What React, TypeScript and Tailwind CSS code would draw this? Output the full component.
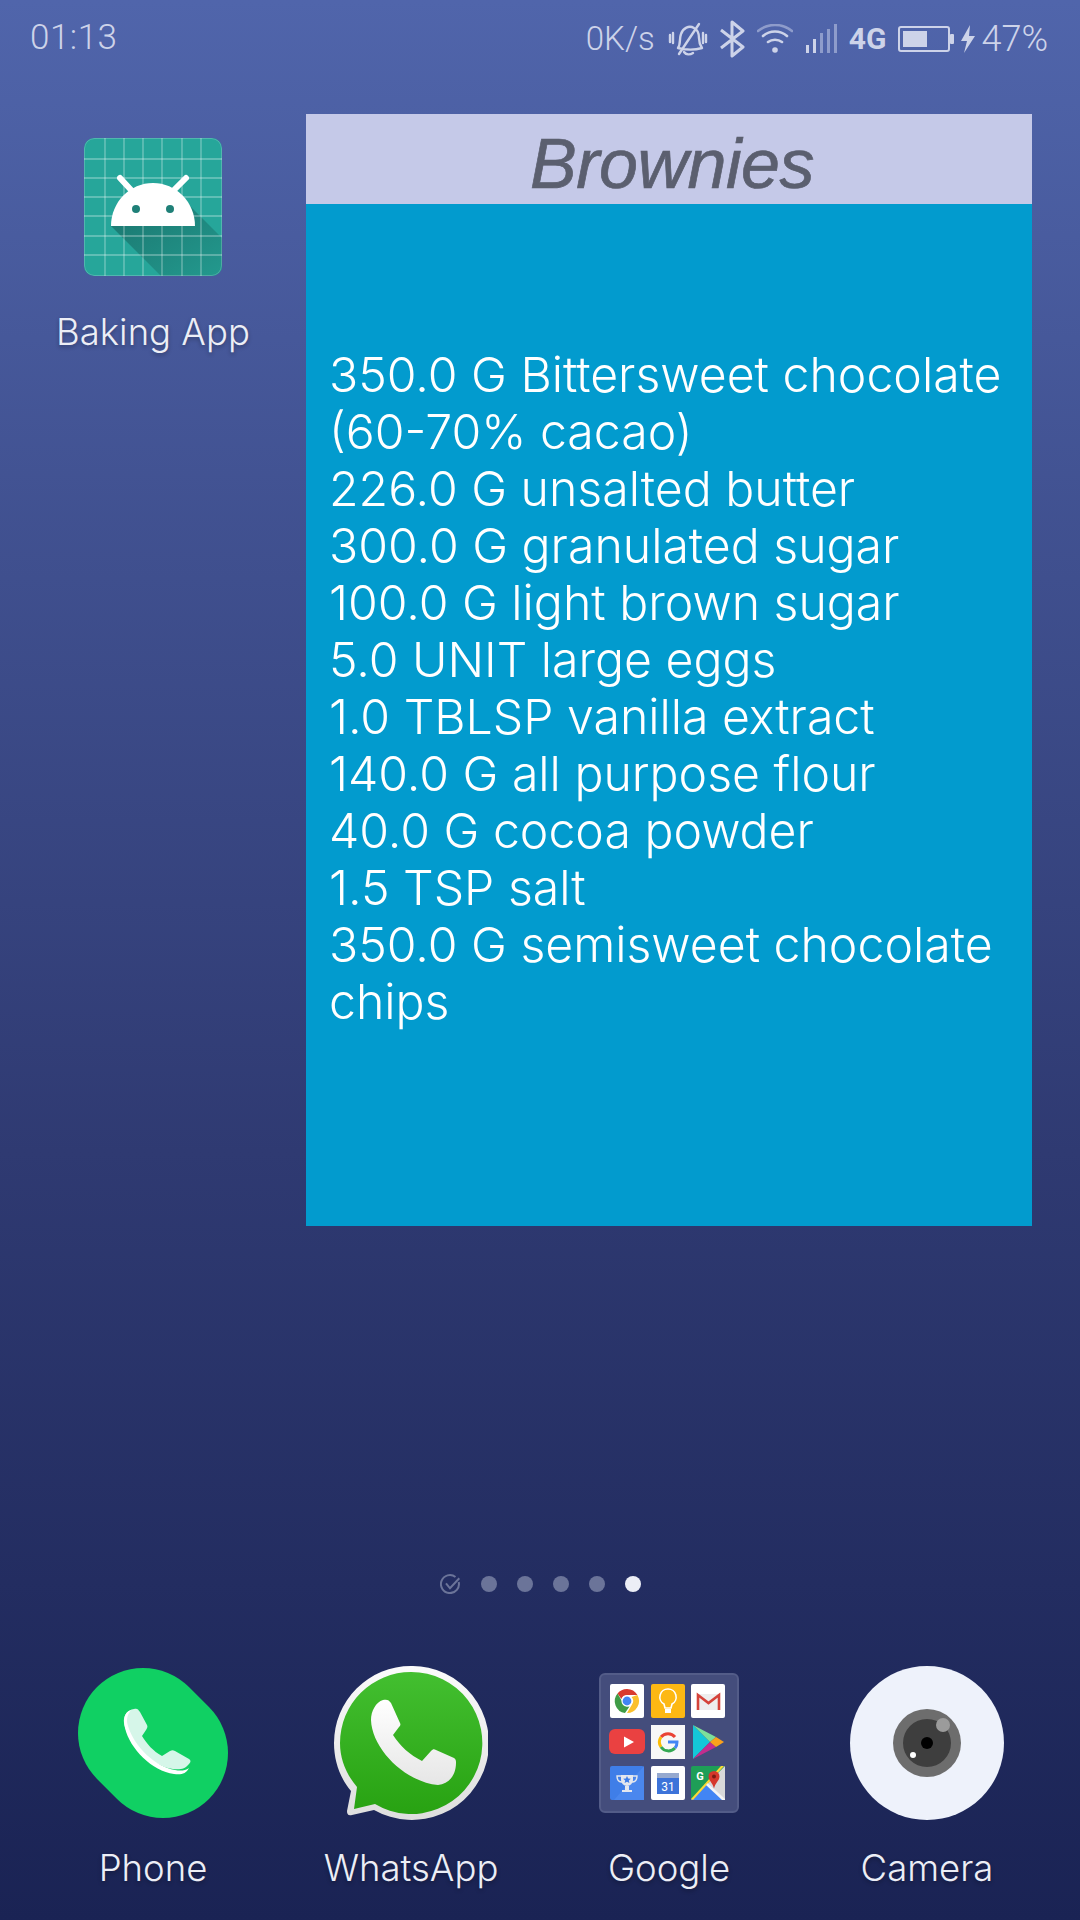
const ingredients = [
  "350.0 G Bittersweet chocolate (60-70% cacao)",
  "226.0 G unsalted butter",
  "300.0 G granulated sugar",
  "100.0 G light brown sugar",
  "5.0 UNIT large eggs",
  "1.0 TBLSP vanilla extract",
  "140.0 G all purpose flour",
  "40.0 G cocoa powder",
  "1.5 TSP salt",
  "350.0 G semisweet chocolate chips",
];

function StatusBar() {
  return (
    <div className="flex h-[76px] items-center justify-between pl-[30px] pr-[32px] pt-[1px] font-['Roboto',sans-serif] text-[36px] font-light text-[#cdd3e9]">
      <span className="text-[35px] tracking-[0.5px]">01:13</span>
      <div className="flex items-center">
        <span className="text-[33px]">0K/s</span>
        <svg className="ml-[13px]" width="40" height="36" viewBox="0 0 40 36" fill="none" stroke="#cdd3e9" strokeWidth="2.4">
          <path d="M10 27c3-4 1-9 3-14 2-6 8-9 13-6 4 2 5 6 5 10 0 4 1 7 3 10-7 2-16 2-24 0zM11 33 31 3" strokeLinecap="round" strokeLinejoin="round" />
          <path d="M16 31c2 3 6 3 9 1M2 14v7M5 12v10M35 12v10M38 14v7" strokeLinecap="round" />
        </svg>
        <svg className="ml-[12px]" width="25" height="38" viewBox="0 0 25 38" fill="none" stroke="#cdd3e9" strokeWidth="3">
          <path d="M1 10 23 27 12 36V2l11 9L1 28" strokeLinejoin="round" />
        </svg>
        <svg className="ml-[12px]" width="36" height="30" viewBox="0 0 36 30" fill="none" strokeWidth="2.6" strokeLinecap="round">
          <path d="M1 7c10-8 24-8 34 0" stroke="#8e9ccb" />
          <path d="M6 12c7-6 17-6 24 0M11 18c4-3 10-3 14 0" stroke="#cdd3e9" />
          <circle cx="18" cy="26" r="2.8" fill="#cdd3e9" stroke="none" />
        </svg>
        <svg className="ml-[13px]" width="31" height="29" viewBox="0 0 31 29">
          <rect x="0" y="21" width="3" height="8" fill="#cdd3e9" />
          <rect x="7" y="15" width="3" height="14" fill="#cdd3e9" />
          <rect x="14" y="9" width="3" height="20" fill="#8e9ccb" />
          <rect x="21" y="5" width="3" height="24" fill="#8e9ccb" />
          <rect x="28" y="0" width="3" height="29" fill="#8e9ccb" />
        </svg>
        <span className="ml-[12px] text-[30px] font-bold">4G</span>
        <svg className="ml-[12px]" width="56" height="26" viewBox="0 0 56 26">
          <rect x="1" y="1" width="50" height="24" rx="2" fill="none" stroke="#cdd3e9" strokeWidth="2" />
          <rect x="5" y="5" width="24" height="16" fill="#cdd3e9" />
          <rect x="52" y="8" width="4" height="10" rx="1" fill="#cdd3e9" />
        </svg>
        <svg className="ml-[7px]" width="14" height="28" viewBox="0 0 14 28">
          <path d="M9 0 0 16h6L3 28 14 11H8z" fill="#cdd3e9" />
        </svg>
        <span className="ml-[6px]">47%</span>
      </div>
    </div>
  );
}

function AndroidIcon() {
  const lines = [21, 40, 59, 78, 98, 117];
  return (
    <svg width="138" height="138" viewBox="0 0 138 138">
      <defs>
        <clipPath id="tile">
          <rect width="138" height="138" rx="10" />
        </clipPath>
        <linearGradient id="shade" x1="0.2" y1="0.2" x2="1" y2="1">
          <stop offset="0" stopColor="#1c7d75" />
          <stop offset="1" stopColor="#23998e" />
        </linearGradient>
      </defs>
      <g clipPath="url(#tile)">
        <rect width="138" height="138" fill="#26a69a" />
        <path d="M27 88 77 138H138V100L105 67z" fill="url(#shade)" />
        {lines.map((p) => (
          <g key={p} stroke="#ffffff" strokeOpacity="0.36" strokeWidth="1.3">
            <line x1={p} y1="0" x2={p} y2="138" />
            <line x1="0" y1={p} x2="138" y2={p} />
          </g>
        ))}
        <rect x="0.5" y="0.5" width="137" height="137" rx="10" fill="none" stroke="#ffffff" strokeOpacity="0.2" />
      </g>
      <path d="M36 40 48 53M102 40 89 53" stroke="#fff" strokeWidth="6" strokeLinecap="round" />
      <path d="M27 88c0-24 19-43 42-43s42 19 42 43z" fill="#fff" />
      <circle cx="52" cy="71" r="4" fill="#1f8078" />
      <circle cx="86" cy="71" r="4" fill="#1f8078" />
    </svg>
  );
}

function PhoneIcon() {
  return (
    <svg width="150" height="150" viewBox="0 0 150 150">
      <path d="M65 65 85 85" stroke="#10d063" strokeWidth="130" strokeLinecap="round" />
      <path d="M56 41c3-1 4 0 6 3l7 13c1 2 0 3-1 5l-4 6c5 8 11 15 20 20l8-5c2-1 3-1 5 0l14 8c2 1 2 3 0 5-4 5-9 6-16 5-22-3-46-27-49-46-1-7 3-13 10-14z" fill="#d6f6e9" />
      <path d="M53 42c-7 2-8 10-6 18 5 21 27 43 49 46 7 1 12 0 15-6-4 3-9 3-14 2-20-3-41-24-47-44-2-6-1-11 3-16z" fill="#fff" />
    </svg>
  );
}

function WhatsAppIcon() {
  return (
    <svg width="154" height="154" viewBox="0 0 154 154">
      <defs>
        <linearGradient id="waGreen" x1="0" y1="0" x2="0" y2="1">
          <stop offset="0" stopColor="#43bf30" />
          <stop offset="1" stopColor="#28a212" />
        </linearGradient>
        <linearGradient id="waPhone" x1="0" y1="0" x2="0" y2="1">
          <stop offset="0" stopColor="#ffffff" />
          <stop offset="1" stopColor="#e6e6e6" />
        </linearGradient>
        <linearGradient id="waRing" x1="0" y1="0" x2="0" y2="1">
          <stop offset="0" stopColor="#fbfbfb" />
          <stop offset="1" stopColor="#dedede" />
        </linearGradient>
      </defs>
      <path d="M77 0a77 77 0 1 1-37 144l-22 5c-4 1-5-1-5-4l4-20C6 112 0 95 0 77A77 77 0 0 1 77 0z" fill="url(#waRing)" />
      <path d="M77 6a71 71 0 1 1-36 132l-21 5 3-22C12 108 6 93 6 77A71 71 0 0 1 77 6z" fill="url(#waGreen)" />
      <path d="M49 34c4-1 6 0 8 3l9 20c1 2 0 3-1 4l-6 8c7 11 17 20 29 26l9-10c2-2 3-2 5-1l18 8c2 1 2 3 2 5 0 12-7 21-18 22-33-3-66-36-67-65 0-9 5-18 12-20z" fill="url(#waPhone)" />
    </svg>
  );
}

function CameraIcon() {
  return (
    <svg width="154" height="154" viewBox="0 0 154 154">
      <circle cx="77" cy="77" r="77" fill="#eef2fb" />
      <circle cx="77" cy="77" r="34" fill="#6d6d6d" />
      <circle cx="77" cy="77" r="24" fill="#3e3e3e" />
      <circle cx="77" cy="77" r="6" fill="#000" />
      <circle cx="93" cy="59" r="7" fill="#9b9b9b" />
      <circle cx="63" cy="89" r="3" fill="#fff" />
    </svg>
  );
}

function Tile({ children }: { children: React.ReactNode }) {
  return (
    <svg width="34" height="34" viewBox="0 0 34 34" className="overflow-visible">
      {children}
    </svg>
  );
}

function GoogleFolder() {
  return (
    <div className="grid h-[140px] w-[140px] grid-cols-[34px_34px_34px] content-start gap-x-[6.5px] gap-y-[7px] rounded-[6px] border-2 border-[#535c88] bg-[#444d7c] p-[9px]">
      <Tile>
        <rect width="34" height="34" rx="2" fill="#fff" />
        <path d="M17 5a12 12 0 0 1 10.4 6H17a6 6 0 0 0-5.6 4L7.5 9.500A12 12 0 0 1 17 5z" fill="#d93a2e" />
        <path d="M27.400 11A12 12 0 0 1 17 29l5-8.500a6 6 0 0 0-.5-7.500z" fill="#fbc02d" />
        <path d="M7.500 9.500l5 8.500a6 6 0 0 0 7 4.500L15 29A12 12 0 0 1 7.500 9.500z" fill="#3f9c46" />
        <circle cx="17" cy="17" r="5" fill="#4285f4" stroke="#fff" strokeWidth="1.2" />
      </Tile>
      <Tile>
        <rect width="34" height="34" rx="2" fill="#fdb813" />
        <path d="M17 5a8 8 0 0 0-4 15l1 4h6l1-4a8 8 0 0 0-4-15z" fill="none" stroke="#fff" strokeWidth="1.6" />
        <rect x="14" y="25" width="6" height="4" fill="#fff" />
      </Tile>
      <Tile>
        <rect width="34" height="34" rx="2" fill="#fff" />
        <path d="M6 10h23v16H6z" fill="#eeeeee" />
        <path d="M7 26V11l10.500 8L28 11v15" fill="none" stroke="#d5433a" strokeWidth="2.600" />
      </Tile>
      <Tile>
        <rect x="-1" y="4" width="36" height="25" rx="6" fill="#ea4141" />
        <path d="M14 11.500 24 17 14 22.500z" fill="#fff" />
      </Tile>
      <Tile>
        <rect width="34" height="34" fill="#f7f7f7" />
        <path d="M24 12a9 9 0 0 0-14 0" fill="none" stroke="#ea4335" strokeWidth="3" />
        <path d="M10 12a9 9 0 0 0 0 10" fill="none" stroke="#fbbc05" strokeWidth="3" />
        <path d="M10 22a9 9 0 0 0 14 1" fill="none" stroke="#34a853" strokeWidth="3" />
        <path d="M24 23a9 9 0 0 0 2-6h-9" fill="none" stroke="#4285f4" strokeWidth="3" />
      </Tile>
      <Tile>
        <path d="M2 0 19 17 2 34z" fill="#14c6d8" />
        <path d="M2 0 25 12 19 17z" fill="#7de09a" />
        <path d="M2 34 25 22 19 17z" fill="#c22d8e" />
        <path d="M25 12 33 17 25 22 19 17z" fill="#fba21b" />
      </Tile>
      <Tile>
        <rect width="34" height="34" rx="2" fill="#3f7ee8" />
        <path d="M34 0v34H4z" fill="#4a87ee" />
        <path d="M11 9h12v5a6 6 0 0 1-12 0zM15 20h4v4h3v2H12v-2h3z" fill="#e4e7ee" />
        <path d="M11 10H7c0 4 2 6 5 6M23 10h4c0 4-2 6-5 6" fill="none" stroke="#e4e7ee" strokeWidth="1.400" />
        <path d="m17 10 1.200 2.500 2.600.3-2 1.700.6 2.500-2.400-1.300-2.400 1.300.6-2.500-2-1.700 2.600-.3z" fill="#3f7ee8" />
      </Tile>
      <Tile>
        <rect width="34" height="34" rx="2" fill="#fff" />
        <rect x="6" y="7" width="22" height="21" fill="#3d73d9" />
        <rect x="6" y="7" width="22" height="5" fill="#96a9cf" />
        <text x="17" y="25" textAnchor="middle" fontSize="12" fontFamily="Roboto, sans-serif" fill="#fff">31</text>
      </Tile>
      <Tile>
        <rect width="34" height="34" rx="2" fill="#1e9e57" />
        <path d="M34 0v34H0z" fill="#d9d9d9" />
        <path d="M0 34 17 17l17 17z" fill="#4285f4" />
        <path d="M0 33 30 0h3L2 34z" fill="#fdd835" />
        <path d="M17 17 34 33v1h-3L15 19z" fill="#f5f5f5" />
        <path d="M23 5a5.500 5.500 0 0 1 5.500 5.500c0 4-4 6-5.500 12-1.500-6-5.500-8-5.500-12A5.500 5.500 0 0 1 23 5z" fill="#d5372c" />
        <circle cx="23" cy="10.500" r="2" fill="#7b1a14" />
        <text x="9" y="14" textAnchor="middle" fontSize="11" fontWeight="700" fontFamily="Roboto, sans-serif" fill="#fff">G</text>
      </Tile>
    </div>
  );
}

function AppLabel({ children }: { children: React.ReactNode }) {
  return (
    <span className="text-center font-['Inter',sans-serif] text-[36.5px] font-light leading-[44px] text-[#eceef6] [text-shadow:0_2px_4px_rgba(0,0,0,0.3)]">
      {children}
    </span>
  );
}

export default function App() {
  const dock = [
    { name: "Phone", icon: <PhoneIcon /> },
    { name: "WhatsApp", icon: <WhatsAppIcon /> },
    { name: "Google", icon: <GoogleFolder /> },
    { name: "Camera", icon: <CameraIcon /> },
  ];

  return (
    <div className="flex h-[1920px] w-[1080px] flex-col overflow-hidden bg-gradient-to-b from-[#5065ab] via-[#2f3a72] via-60% to-[#1a2354]">
      <StatusBar />

      <div className="mt-[38px] flex">
        <div className="flex w-[306px] flex-col items-center pt-[24px]">
          <AndroidIcon />
          <div className="mt-[34px]">
            <AppLabel>Baking App</AppLabel>
          </div>
        </div>
        <div className="flex h-[1112px] w-[726px] flex-col">
          <div className="flex h-[90px] items-center justify-center bg-[#c5c9e8] pt-[10px] pl-[6px]">
            <span className="font-['Liberation_Sans',sans-serif] text-[70px] italic leading-none tracking-[-0.5px] text-[#5b5f6f] [-webkit-text-stroke:0.7px_#5b5f6f]">
              Brownies
            </span>
          </div>
          <div className="flex-1 bg-[#029bce] pl-[23px] pr-[20px] pt-[142px] font-['Inter',sans-serif] text-[48.2px] font-light leading-[57px] text-white">
            {ingredients.map((line) => (
              <div key={line}>{line}</div>
            ))}
          </div>
        </div>
      </div>

      <div className="mt-auto flex h-[20px] items-center justify-center">
        <svg width="20" height="20" viewBox="0 0 20 20" fill="none" stroke="#6b7499" strokeWidth="2">
          <path d="M15.500 3A9 9 0 1 0 18.700 8" />
          <path d="m6 9.300 4 5 9.300-10" />
        </svg>
        <div className="ml-[21px] flex gap-[20px]">
          <span className="h-[16px] w-[16px] rounded-full bg-[#6b7499]" />
          <span className="h-[16px] w-[16px] rounded-full bg-[#6b7499]" />
          <span className="h-[16px] w-[16px] rounded-full bg-[#6b7499]" />
          <span className="h-[16px] w-[16px] rounded-full bg-[#6b7499]" />
          <span className="h-[16px] w-[16px] rounded-full bg-[#eceef6]" />
        </div>
      </div>

      <div className="mt-[72px] grid h-[254px] grid-cols-4 px-[24px]">
        {dock.map((app) => (
          <div key={app.name} className="flex flex-col items-center">
            <div className="flex h-[154px] items-center justify-center">{app.icon}</div>
            <div className="mt-[26px]">
              <AppLabel>{app.name}</AppLabel>
            </div>
          </div>
        ))}
      </div>
    </div>
  );
}
